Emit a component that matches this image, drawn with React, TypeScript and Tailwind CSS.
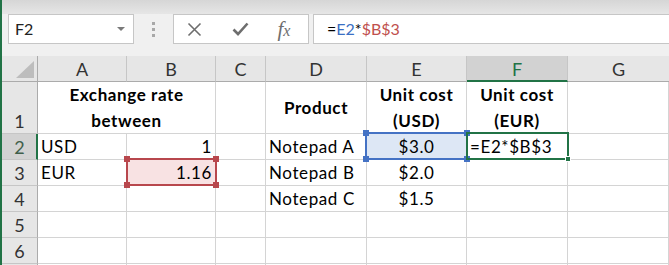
import React from "react";

function HeaderCell({ label, selected, last }: { label: string; selected?: boolean; last?: boolean }) {
  return (
    <div
      className={
        selected
          ? "flex items-end justify-center bg-[#d2d2d2] border-r border-r-[#c6c6c6] border-b-2 border-b-[#217346] text-[#217346] text-[18px] leading-[20px] pb-[1px]"
          : last
          ? "flex items-end justify-center bg-[#e6e6e6] border-b border-b-[#ababab] text-[#333333] text-[18px] leading-[20px] pb-[2px]"
          : "flex items-end justify-center bg-[#e6e6e6] border-r border-r-[#c6c6c6] border-b border-b-[#ababab] text-[#333333] text-[18px] leading-[20px] pb-[2px]"
      }
    >
      {label}
    </div>
  );
}

function RowHead({ n, selected }: { n?: number; selected?: boolean }) {
  return (
    <div
      className={
        selected
          ? "flex items-end justify-center bg-[#d2d2d2] border-r-2 border-r-[#217346] border-b border-b-[#c6c6c6] text-[#3f5e4a] text-[18px] leading-[20px] pb-[2px] pl-[1px]"
          : "flex items-end justify-center bg-[#e6e6e6] border-r border-r-[#ababab] border-b border-b-[#c6c6c6] text-[#333333] text-[18px] leading-[20px] pb-[2px]"
      }
    >
      {n}
    </div>
  );
}

function Cell({
  children,
  align = "left",
  valign = "bottom",
  bold,
  className = "",
}: {
  children?: React.ReactNode;
  align?: "left" | "right" | "center";
  valign?: "bottom" | "middle";
  bold?: boolean;
  className?: string;
}) {
  const a = align === "right" ? "justify-end pr-[3px]" : align === "center" ? "justify-center" : "justify-start pl-[3px]";
  const v = valign === "middle" ? "items-center" : "items-end pb-[2px]";
  return (
    <div
      className={`flex ${v} border-r border-b border-[#d4d4d4] text-[17px] leading-[20px] tracking-[0.6px] text-black ${a} ${bold ? "font-bold" : ""} ${className}`}
    >
      {children}
    </div>
  );
}

function TwoLine({ a, b }: { a: string; b: string }) {
  return (
    <div className="flex flex-col items-center font-bold leading-[26px] -mb-[3px]">
      <span>{a}</span>
      <span>{b}</span>
    </div>
  );
}

function Handles({ color }: { color: string }) {
  return (
    <>
      <span className="absolute -left-[4px] -top-[4px] w-[6px] h-[6px]" style={{ background: color }} />
      <span className="absolute -right-[4px] -top-[4px] w-[6px] h-[6px]" style={{ background: color }} />
      <span className="absolute -left-[4px] -bottom-[4px] w-[6px] h-[6px]" style={{ background: color }} />
      <span className="absolute -right-[4px] -bottom-[4px] w-[6px] h-[6px]" style={{ background: color }} />
    </>
  );
}

export default function App() {
  return (
    <div
      className="w-[669px] h-[265px] overflow-hidden bg-white border-l-2 border-[#217346] flex flex-col"
      style={{ fontFamily: "Lato, 'Open Sans', sans-serif" }}
    >
      {/* toolbar */}
      <div className="h-[56px] bg-[#f0f0f0] flex flex-col shrink-0">
        <div className="h-[14px] bg-gradient-to-b from-[#d6d6d6] to-[#e6e6e6]" />
        <div className="h-[30px] flex items-stretch">
          <div className="ml-[6px] w-[126px] bg-white border border-[#c6c6c6] flex items-center justify-between pl-[6px] pr-[8px] text-[16px] text-[#222]">
            <span>F2</span>
            <span className="w-0 h-0 border-l-[4px] border-r-[4px] border-t-[4px] border-l-transparent border-r-transparent border-t-[#7a7a7a]" />
          </div>
          <div className="w-[39px] flex flex-col items-center justify-center gap-[3px]">
            <span className="w-[3px] h-[3px] bg-[#a8a8a8]" />
            <span className="w-[3px] h-[3px] bg-[#a8a8a8]" />
            <span className="w-[3px] h-[3px] bg-[#a8a8a8]" />
          </div>
          <div className="w-[136px] bg-white border border-[#c6c6c6] flex items-center">
            <div className="w-[41px] flex justify-center">
              <svg width="15" height="15" viewBox="0 0 15 15">
                <path d="M1.5 1.5 L13.5 13.5 M13.5 1.5 L1.5 13.5" stroke="#6e6e6e" strokeWidth="1.6" fill="none" />
              </svg>
            </div>
            <div className="w-[50px] flex justify-center">
              <svg width="17" height="14" viewBox="0 0 17 14">
                <path d="M1.5 7.5 L6 12 L15.5 1.5" stroke="#6e6e6e" strokeWidth="2.6" fill="none" />
              </svg>
            </div>
            <div className="w-[38px] flex justify-center">
              <span
                className="italic text-[21px] leading-none text-[#6e6e6e]"
                style={{ fontFamily: "'Liberation Serif', serif" }}
              >
                f<span className="text-[16px]">x</span>
              </span>
            </div>
          </div>
          <div className="ml-[4px] flex-1 bg-white border border-[#c6c6c6] border-r-0 flex items-center pl-[13px] text-[16px]">
            <span className="text-black">=</span>
            <span className="text-[#3a6fc4]">E2</span>
            <span className="text-black">*</span>
            <span className="text-[#c0504d]">$B$3</span>
          </div>
        </div>
      </div>

      {/* grid */}
      <div className="relative flex-1">
        <div className="grid grid-cols-[36px_89px_89px_50px_101px_100px_101px_1fr] grid-rows-[26px_52px_26px_26px_26px_26px_26px_26px]">
          {/* header row */}
          <div className="bg-[#e6e6e6] border-r border-r-[#ababab] border-b border-b-[#ababab] relative">
            <svg className="absolute right-[3px] bottom-[3px]" width="18" height="17" viewBox="0 0 18 17">
              <path d="M18 0 L18 17 L0 17 Z" fill="#bdbdbd" />
            </svg>
          </div>
          <HeaderCell label="A" />
          <HeaderCell label="B" />
          <HeaderCell label="C" />
          <HeaderCell label="D" />
          <HeaderCell label="E" />
          <HeaderCell label="F" selected />
          <HeaderCell label="G" last />

          {/* row 1 */}
          <RowHead n={1} />
          <Cell align="center" className="col-span-2">
            <TwoLine a="Exchange rate" b="between" />
          </Cell>
          <Cell />
          <Cell align="center" valign="middle" bold>
            Product
          </Cell>
          <Cell align="center">
            <TwoLine a="Unit cost" b="(USD)" />
          </Cell>
          <Cell align="center">
            <TwoLine a="Unit cost" b="(EUR)" />
          </Cell>
          <Cell />

          {/* row 2 */}
          <RowHead n={2} selected />
          <Cell>USD</Cell>
          <Cell align="right">1</Cell>
          <Cell />
          <Cell>Notepad A</Cell>
          <Cell align="center" className="bg-[#dde7f5]">$3.0</Cell>
          <Cell className="pl-[1px]">=E2*$B$3</Cell>
          <Cell />

          {/* row 3 */}
          <RowHead n={3} />
          <Cell>EUR</Cell>
          <Cell align="right" className="bg-[#f8e2e3]">1.16</Cell>
          <Cell />
          <Cell>Notepad B</Cell>
          <Cell align="center">$2.0</Cell>
          <Cell />
          <Cell />

          {/* row 4 */}
          <RowHead n={4} />
          <Cell />
          <Cell />
          <Cell />
          <Cell>Notepad C</Cell>
          <Cell align="center">$1.5</Cell>
          <Cell />
          <Cell />

          {[5, 6, 7].map((n) => (
            <React.Fragment key={n}>
              <RowHead n={n < 7 ? n : undefined} />
              <Cell />
              <Cell />
              <Cell />
              <Cell />
              <Cell />
              <Cell />
              <Cell />
            </React.Fragment>
          ))}
        </div>

        {/* blue reference range E2 */}
        <div className="absolute left-[363px] top-[76px] w-[103px] h-[28px] border-2 border-[#4472c4]">
          <Handles color="#4472c4" />
        </div>

        {/* red reference range B3 */}
        <div className="absolute left-[124px] top-[102px] w-[91px] h-[28px] border-2 border-[#b8474d]">
          <Handles color="#b8474d" />
        </div>

        {/* active cell F2 */}
        <div className="absolute left-[464px] top-[76px] w-[103px] h-[28px] border-2 border-[#217346]">
          <span className="absolute -right-[4px] -bottom-[4px] w-[6px] h-[6px] bg-[#217346] border border-white" />
        </div>
      </div>
    </div>
  );
}
